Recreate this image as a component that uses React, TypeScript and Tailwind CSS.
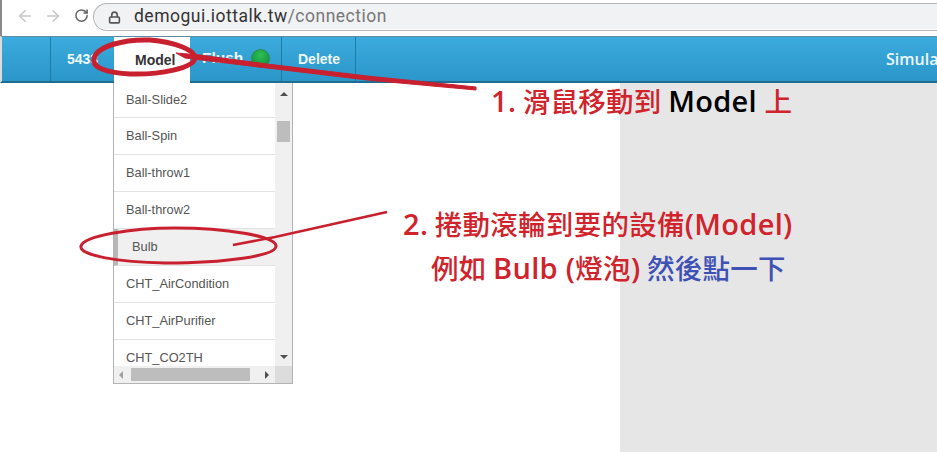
import { ArrowLeft, ArrowRight, Lock, RotateCw } from "lucide-react";

const models = [
  "Ball-Slide2",
  "Ball-Spin",
  "Ball-throw1",
  "Ball-throw2",
  "Bulb",
  "CHT_AirCondition",
  "CHT_AirPurifier",
  "CHT_CO2TH",
];

function BrowserBar() {
  return (
    <div className="h-9 flex items-start bg-white border-l-2 border-[#8a8a8a]">
      <div className="w-[91px] h-[31px] flex items-center pl-[14px] gap-[10px] text-[#c4c6c8]">
        <ArrowLeft size={18} strokeWidth={2} />
        <ArrowRight size={18} strokeWidth={2} />
        <RotateCw size={15} strokeWidth={2.4} className="text-[#666] ml-[2px]" />
      </div>
      <div className="flex-1 mt-[3px] h-[28px] flex items-center pl-[14px] bg-[#f1f2f4] border-y border-l border-[#b5b5b5] rounded-l-[14px] shadow-[inset_0_-1px_0_#fff]">
        <Lock size={13} strokeWidth={3} className="text-[#555] mr-[13px]" />
        <span className="font-['Roboto',sans-serif] text-[17.5px] leading-none tracking-[0.5px] text-[#333]">
          demogui.iottalk.tw<span className="text-[#777]">/connection</span>
        </span>
      </div>
    </div>
  );
}

function NavBar() {
  return (
    <div className="h-[47px] flex bg-gradient-to-b from-[#3cabdd] to-[#2b96c9] border-t border-b-2 border-l-2 border-t-[#5d8ea6] border-b-[#1f6d91] border-l-[#dcdcdc] font-['Liberation_Sans',sans-serif] text-[14px] font-bold text-[#eef8fd]">
      <div className="w-[49px] shrink-0 border-r border-[#1f7aa5]" />
      <div className="w-[63px] shrink-0 pl-[16px] flex items-center overflow-hidden">5433</div>
      <div className="w-[76px] shrink-0 -mb-[2px] bg-white text-[#333] flex items-center pl-[21px]">Model</div>
      <div className="w-[92px] shrink-0 flex items-center pl-[12px] gap-[8px] pb-[2px] border-r border-[#1f7aa5] text-[15.5px]">
        Flush
        <span className="w-[19px] h-[19px] rounded-full bg-[radial-gradient(circle_at_50%_30%,#2fbf57,#0a8a35)] border border-[#2f8a4d]" />
      </div>
      <div className="w-[74px] shrink-0 flex items-center pl-[16px] border-r border-[#1f7aa5]">Delete</div>
      <div className="flex-1 flex items-center justify-end overflow-hidden whitespace-nowrap text-[16px]">
        <span className="w-[51px] font-['Open_Sans',sans-serif] font-semibold">Simula</span>
      </div>
    </div>
  );
}

function ModelMenu() {
  return (
    <div className="absolute left-[113px] top-[83px] w-[180px] h-[301px] bg-white border border-t-0 border-[#b4b4b4] flex flex-col font-['Liberation_Sans',sans-serif] text-[12.8px] text-[#555]">
      <div className="flex h-[283px]">
        <ul className="flex-1 overflow-hidden">
          {models.map((name, i) => (
            <li
              key={name}
              className={
                name === "Bulb"
                  ? "h-[37px] shrink-0 flex items-center pl-[14px] bg-[#f0f0f0] border-l-4 border-[#b8b8b8] border-b border-b-[#e3e3e3]"
                  : i === 0
                    ? "h-[35px] flex items-center pl-[12px] border-b border-[#e3e3e3]"
                    : "h-[37px] flex items-center pl-[12px] border-b border-[#e3e3e3]"
              }
            >
              {name}
            </li>
          ))}
        </ul>
        <div className="w-[17px] shrink-0 bg-[#f0f0f0] flex flex-col items-center">
          <span className="mt-[9px] w-0 h-0 border-x-[4px] border-x-transparent border-b-[4px] border-b-[#505050]" />
          <span className="mt-[25px] w-[13px] h-[21px] bg-[#bdbdbd]" />
          <span className="mt-auto mb-[7px] w-0 h-0 border-x-[4px] border-x-transparent border-t-[4px] border-t-[#505050]" />
        </div>
      </div>
      <div className="h-[17px] flex items-center bg-[#f0f0f0]">
        <span className="ml-[5px] w-0 h-0 border-y-[4px] border-y-transparent border-r-[4px] border-r-[#a0a0a0]" />
        <span className="ml-[8px] w-[119px] h-[13px] bg-[#bdbdbd]" />
        <span className="ml-[15px] w-0 h-0 border-y-[4px] border-y-transparent border-l-[4px] border-l-[#505050]" />
        <span className="ml-auto w-[17px] h-full bg-[#dcdcdc]" />
      </div>
    </div>
  );
}

function RedMarks() {
  return (
    <svg className="absolute inset-0 pointer-events-none" width="937" height="452" viewBox="0 0 937 452" fill="none">
      <path
        d="M94 59C96 46 125 39 150 40C175 42 195 50 195 58C194 68 160 75 130 74C108 73 92 68 94 59Z"
        stroke="#c8202f"
        strokeWidth="5"
      />
      <path d="M176 53L200 55L267 64L367 76L476 87L476 90L367 80L267 68L185 58Z" fill="#c8202f" stroke="#c8202f" strokeWidth="1" />
      <path
        d="M81 246C84 236 130 228 175 228C225 228 276 236 276 246C276 256 225 263 165 263C120 262 79 256 81 246Z"
        stroke="#c8202f"
        strokeWidth="3"
      />
      <path d="M233 245L275 237L387 212" stroke="#c8202f" strokeWidth="2.5" />
    </svg>
  );
}

const latin = "font-['Open_Sans',sans-serif] text-[29px] font-semibold";

function Notes() {
  const cjk = "font-['Noto_Sans_CJK_TC',sans-serif] text-[27.5px] tracking-[0.3px] leading-[32px] font-medium text-[#d0232c] whitespace-nowrap";
  return (
    <>
      <p className={`absolute left-[491px] top-[84px] ${cjk}`}>
        <span className={latin}>1.</span> 滑鼠移動到 <span className={`${latin} text-black`}>Model</span> <span className="ml-[1px]">上</span>
      </p>
      <p className={`absolute left-[403px] top-[207px] ${cjk}`}>
        <span className={latin}>2.</span> 捲動滾輪到要的設備<span className={latin}>(Model)</span>
      </p>
      <p className={`absolute left-[431px] top-[251px] ${cjk}`}>
        例如 <span className={latin}>Bulb (</span>燈泡<span className={latin}>)</span> <span className="text-[#3f51b5]">然後點一下</span>
      </p>
    </>
  );
}

export default function App() {
  return (
    <div className="relative w-[937px] h-[452px] overflow-hidden bg-white flex flex-col">
      <BrowserBar />
      <NavBar />
      <div className="flex-1 flex justify-end">
        <div className="w-[317px] bg-[#e6e6e7]" />
      </div>
      <ModelMenu />
      <RedMarks />
      <Notes />
    </div>
  );
}
